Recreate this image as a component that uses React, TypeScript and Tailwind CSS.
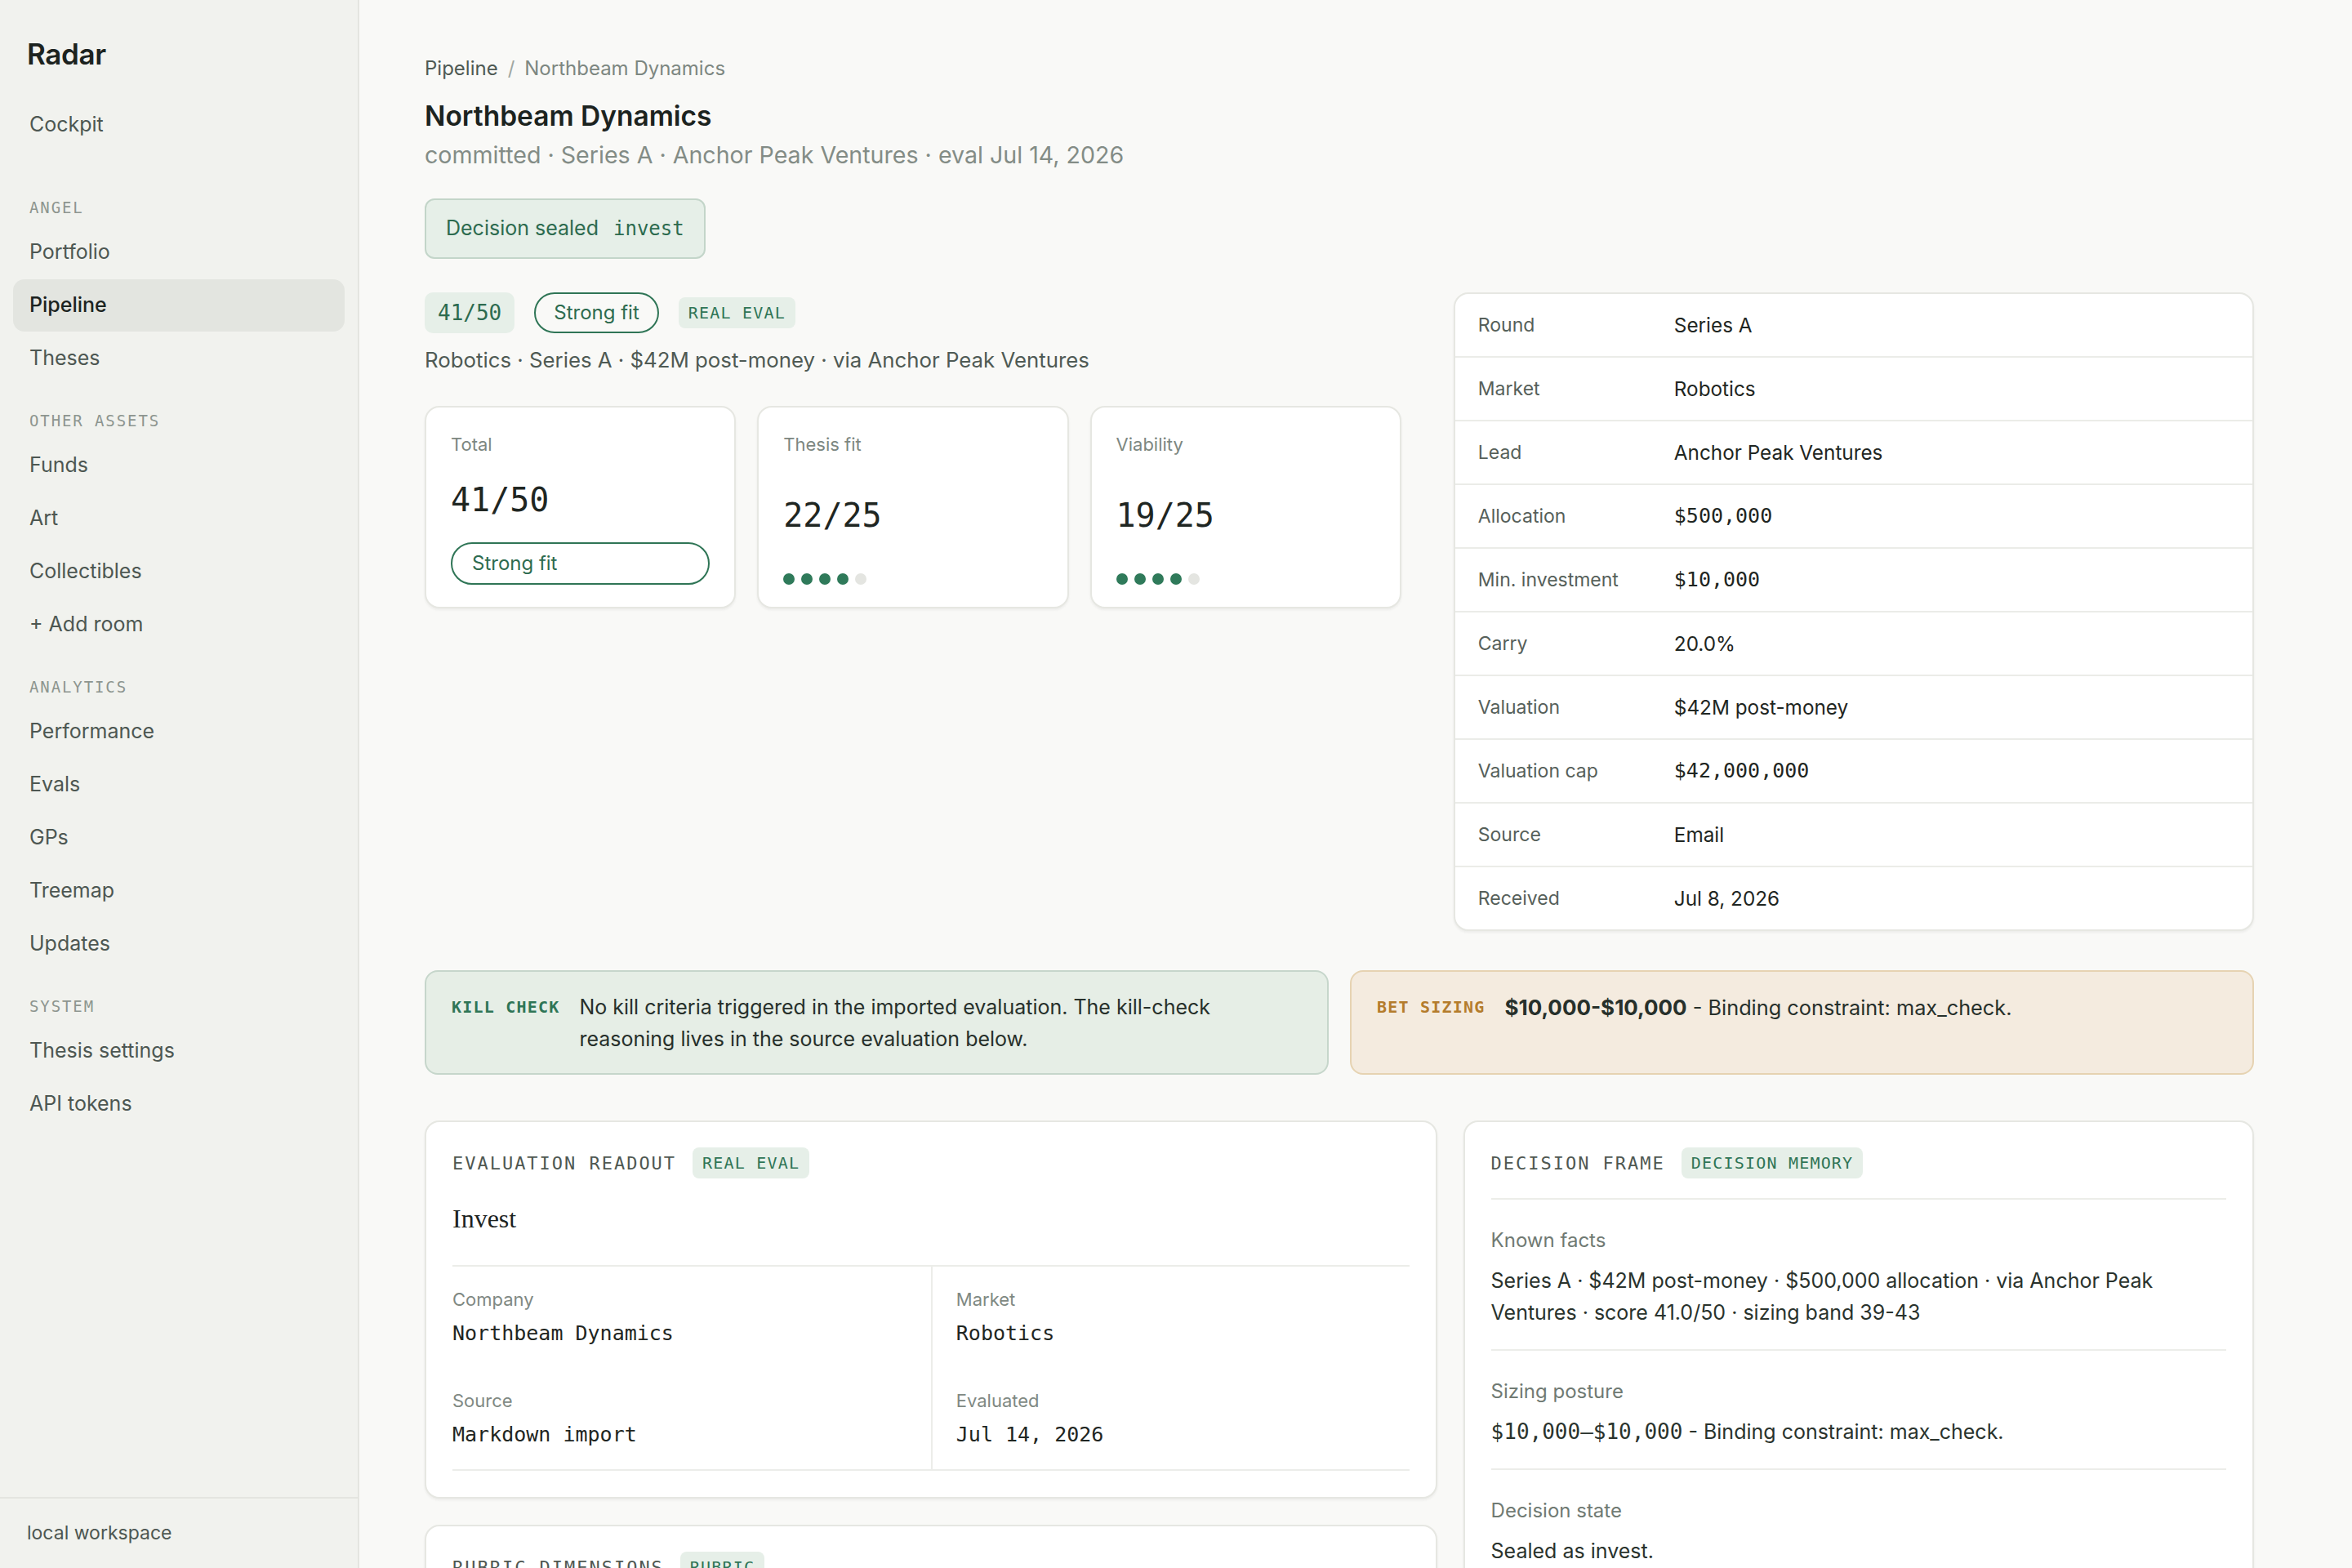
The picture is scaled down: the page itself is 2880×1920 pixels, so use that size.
const MONO = "[font-family:'DejaVu_Sans_Mono',monospace]";
const SERIF = "[font-family:'Liberation_Serif',serif]";

function NavItem({ label, active = false }: { label: string; active?: boolean }) {
  return (
    <div
      className={
        active
          ? "h-[64px] flex items-center px-5 rounded-[14px] bg-[#e3e5e0] text-[25px] font-medium text-[#1c231f]"
          : "h-[64px] flex items-center px-5 rounded-[14px] text-[25px] text-[#4d5752]"
      }
    >
      {label}
    </div>
  );
}

function SectionLabel({ label, first = false }: { label: string; first?: boolean }) {
  return (
    <div
      className={`${MONO} ${
        first ? "mt-[56px]" : "mt-[31px]"
      } mb-[10px] h-6 leading-6 px-5 text-[19px] tracking-[0.1em] text-[#8d958f]`}
    >
      {label}
    </div>
  );
}

function Sidebar() {
  return (
    <aside className="w-[440px] shrink-0 h-screen flex flex-col bg-[#f1f2ee] border-r-2 border-[#e4e5e0]">
      <div className="flex-1 px-4 pt-[44px]">
        <div className="px-[17px] h-[44px] flex items-center text-[35px] font-semibold tracking-[-0.01em] text-[#1c231f]">
          Radar
        </div>
        <nav className="mt-[33px] flex flex-col gap-[1px]">
          <NavItem label="Cockpit" />
          <SectionLabel label="ANGEL" first />
          <NavItem label="Portfolio" />
          <NavItem label="Pipeline" active />
          <NavItem label="Theses" />
          <SectionLabel label="OTHER ASSETS" />
          <NavItem label="Funds" />
          <NavItem label="Art" />
          <NavItem label="Collectibles" />
          <NavItem label="+ Add room" />
          <SectionLabel label="ANALYTICS" />
          <NavItem label="Performance" />
          <NavItem label="Evals" />
          <NavItem label="GPs" />
          <NavItem label="Treemap" />
          <NavItem label="Updates" />
          <SectionLabel label="SYSTEM" />
          <NavItem label="Thesis settings" />
          <NavItem label="API tokens" />
        </nav>
      </div>
      <div className="h-[87px] shrink-0 border-t-2 border-[#e4e5e0] px-[33px] flex items-center text-[23px] text-[#4d5752]">
        local workspace
      </div>
    </aside>
  );
}

function ScoreCard({ label, value, children }: { label: string; value: string; children: React.ReactNode }) {
  return (
    <div className="h-[248px] flex flex-col justify-between rounded-[18px] border-2 border-[#e6e7e2] bg-white px-[30px] pt-[29px] pb-[27px] shadow-[0_2px_3px_rgba(30,40,35,0.06)]">
      <div className="text-[22px] leading-[32px] text-[#7d8781]">{label}</div>
      <div className={`${MONO} text-[40px] leading-[48px] text-[#1f2622]`}>{value}</div>
      {children}
    </div>
  );
}

function Dots({ filled }: { filled: number }) {
  return (
    <div className="flex gap-2 h-[14px]">
      {[0, 1, 2, 3, 4].map((i) => (
        <span
          key={i}
          className={i < filled ? "w-[14px] h-[14px] rounded-full bg-[#2f7a5a]" : "w-[14px] h-[14px] rounded-full bg-[#e4e5e1]"}
        />
      ))}
    </div>
  );
}

const facts: { k: string; v: string; mono?: boolean }[] = [
  { k: "Round", v: "Series A" },
  { k: "Market", v: "Robotics" },
  { k: "Lead", v: "Anchor Peak Ventures" },
  { k: "Allocation", v: "$500,000", mono: true },
  { k: "Min. investment", v: "$10,000", mono: true },
  { k: "Carry", v: "20.0%" },
  { k: "Valuation", v: "$42M post-money" },
  { k: "Valuation cap", v: "$42,000,000", mono: true },
  { k: "Source", v: "Email" },
  { k: "Received", v: "Jul 8, 2026" },
];

function Tag({ children }: { children: React.ReactNode }) {
  return (
    <span className={`${MONO} h-[38px] inline-flex items-center rounded-[8px] bg-[#e6efe8] px-[12px] text-[20px] tracking-[0.06em] text-[#2f7556]`}>
      {children}
    </span>
  );
}

function CardHeader({ title, tag }: { title: string; tag: string }) {
  return (
    <div className="flex items-center gap-5 h-[38px]">
      <span className={`${MONO} text-[22px] tracking-[0.09em] text-[#4f5852]`}>{title}</span>
      <Tag>{tag}</Tag>
    </div>
  );
}

function EvalCell({ label, value, right = false }: { label: string; value: string; right?: boolean }) {
  return (
    <div className={right ? "py-6 pl-[29px] border-l-2 border-[#ecede9]" : "py-6"}>
      <div className="text-[22px] leading-[32px] text-[#7f8983]">{label}</div>
      <div className={`${MONO} mt-2 text-[25px] leading-[36px] text-[#1f2622]`}>{value}</div>
    </div>
  );
}

function FrameSection({ label, children, last = false }: { label: string; children: React.ReactNode; last?: boolean }) {
  return (
    <div className={last ? "pt-8 pb-[25px]" : "pt-8 pb-[25px] border-b-2 border-[#ecede9]"}>
      <div className="text-[24px] leading-[36px] text-[#707a73]">{label}</div>
      <div className="mt-[12px] text-[25px] leading-[39px] text-[#2a332d]">{children}</div>
    </div>
  );
}

export default function App() {
  return (
    <div className="flex h-screen overflow-hidden [font-family:Inter,sans-serif] text-[#1f2622]">
      <Sidebar />
      <main className="flex-1 h-screen overflow-hidden bg-[#f9f9f7] pl-20 pr-20 pt-[66px]">
        <div className="max-w-[2240px]">
          {/* breadcrumb + title */}
          <div className="text-[24px] leading-[36px]">
            <span className="text-[#4f5a54]">Pipeline</span>
            <span className="mx-3 text-[#a0a7a2]">/</span>
            <span className="text-[#7d8781]">Northbeam Dynamics</span>
          </div>
          <h1 className="mt-[18px] text-[33.5px] leading-[44px] font-semibold text-[#1c231f]">Northbeam Dynamics</h1>
          <div className="mt-[6px] text-[28.6px] leading-[40px] text-[#838c86]">
            committed · Series A · Anchor Peak Ventures · eval Jul 14, 2026
          </div>
          <div className="mt-[33px] inline-flex items-center h-[74px] px-6 rounded-[12px] border-2 border-[#c3d5c9] bg-[#e6efe8] text-[25px] text-[#2d6b4f]">
            <span>Decision sealed</span>
            <span className={`${MONO} ml-[18px] text-[24px]`}>invest</span>
          </div>

          {/* top section */}
          <div className="mt-[41px] grid grid-cols-[minmax(0,1.22fr)_minmax(0,1fr)] gap-16 items-start">
            <div>
              <div className="flex items-center gap-6 h-[50px]">
                <span className={`${MONO} h-[50px] inline-flex items-center px-4 rounded-[10px] bg-[#e6efe8] text-[26px] text-[#2d6b4f]`}>
                  41/50
                </span>
                <span className="h-[50px] inline-flex items-center px-[22px] rounded-full border-2 border-[#2f7556] text-[24px] text-[#2d6b4f]">
                  Strong fit
                </span>
                <Tag>REAL EVAL</Tag>
              </div>
              <div className="mt-[13px] text-[25.8px] leading-[40px] text-[#4f5a54]">
                Robotics · Series A · $42M post-money · via Anchor Peak Ventures
              </div>
              <div className="mt-[36px] grid grid-cols-3 gap-[26px]">
                <ScoreCard label="Total" value="41/50">
                  <div className="h-[52px] rounded-full border-2 border-[#2f7556] px-6 flex items-center text-[24px] text-[#2d6b4f]">
                    Strong fit
                  </div>
                </ScoreCard>
                <ScoreCard label="Thesis fit" value="22/25">
                  <Dots filled={4} />
                </ScoreCard>
                <ScoreCard label="Viability" value="19/25">
                  <Dots filled={4} />
                </ScoreCard>
              </div>
            </div>

            <div className="rounded-[18px] border-2 border-[#e6e7e2] bg-white overflow-hidden shadow-[0_2px_3px_rgba(30,40,35,0.06)]">
              {facts.map((f, i) => (
                <div
                  key={f.k}
                  className={
                    i
                      ? "grid grid-cols-[240px_1fr] items-center px-[28px] h-[78px] border-t-2 border-[#ebece8]"
                      : "grid grid-cols-[240px_1fr] items-center px-[28px] h-[76px]"
                  }
                >
                  <span className="text-[23px] text-[#56605a]">{f.k}</span>
                  <span className={f.mono ? `${MONO} text-[25px] text-[#1f2622]` : "text-[24.3px] text-[#1f2622]"}>{f.v}</span>
                </div>
              ))}
            </div>
          </div>

          {/* kill check / bet sizing */}
          <div className="mt-12 grid grid-cols-2 gap-[26px]">
            <div className="flex gap-6 rounded-[16px] border-2 border-[#c6d6cb] bg-[#e6eee6] px-[31px] pt-6 pb-[22px]">
              <span className={`${MONO} shrink-0 leading-[39px] text-[20px] font-bold tracking-[0.06em] text-[#2f7556]`}>KILL CHECK</span>
              <p className="text-[25px] leading-[39px] text-[#27302b]">
                No kill criteria triggered in the imported evaluation. The kill-check reasoning lives in the source evaluation below.
              </p>
            </div>
            <div className="flex gap-6 rounded-[16px] border-2 border-[#e6d3b2] bg-[#f4ebdf] px-[31px] pt-6 pb-[22px]">
              <span className={`${MONO} shrink-0 leading-[39px] text-[20px] font-bold tracking-[0.06em] text-[#b47c2c]`}>BET SIZING</span>
              <p className="text-[25.3px] leading-[39px] text-[#27302b]">
                <span className="font-bold text-[26px]">$10,000-$10,000</span> - Binding constraint: max_check.
              </p>
            </div>
          </div>

          {/* bottom cards */}
          <div className="mt-14 grid grid-cols-[minmax(0,1.28fr)_minmax(0,1fr)] gap-8 items-start">
            <div className="flex flex-col gap-8">
              <div className="rounded-[18px] border-2 border-[#e6e7e2] bg-white px-8 pt-[31px] pb-8 shadow-[0_2px_3px_rgba(30,40,35,0.06)]">
                <CardHeader title="EVALUATION READOUT" tag="REAL EVAL" />
                <div className={`${SERIF} mt-[27px] pb-[35px] text-[32px] leading-[44px] text-[#1c231f]`}>Invest</div>
                <div className="grid grid-cols-2 border-y-2 border-[#ecede9]">
                  <EvalCell label="Company" value="Northbeam Dynamics" />
                  <EvalCell label="Market" value="Robotics" right />
                  <EvalCell label="Source" value="Markdown import" />
                  <EvalCell label="Evaluated" value="Jul 14, 2026" right />
                </div>
              </div>
              <div className="rounded-[18px] border-2 border-[#e6e7e2] bg-white px-8 pt-[31px] pb-8 shadow-[0_2px_3px_rgba(30,40,35,0.06)]">
                <CardHeader title="RUBRIC DIMENSIONS" tag="RUBRIC" />
                <div className="mt-6 flex flex-col">
                  {["Team", "Market", "Product", "Traction", "Terms"].map((d) => (
                    <div key={d} className="flex items-center justify-between py-5 border-t-2 border-[#ecede9] text-[25px]">
                      <span>{d}</span>
                      <span className={MONO}>8/10</span>
                    </div>
                  ))}
                </div>
              </div>
            </div>

            <div className="rounded-[18px] border-2 border-[#e6e7e2] bg-white px-8 pt-[31px] shadow-[0_2px_3px_rgba(30,40,35,0.06)]">
              <div className="pb-6 border-b-2 border-[#ecede9]">
                <CardHeader title="DECISION FRAME" tag="DECISION MEMORY" />
              </div>
              <FrameSection label="Known facts">
                Series A · $42M post-money · $500,000 allocation · via Anchor Peak Ventures · score 41.0/50 · sizing band 39-43
              </FrameSection>
              <FrameSection label="Sizing posture">
                <span className={`${MONO} text-[26px]`}>$10,000–$10,000</span> - Binding constraint: max_check.
              </FrameSection>
              <FrameSection label="Decision state" last>
                Sealed as invest.
              </FrameSection>
            </div>
          </div>
        </div>
      </main>
    </div>
  );
}
